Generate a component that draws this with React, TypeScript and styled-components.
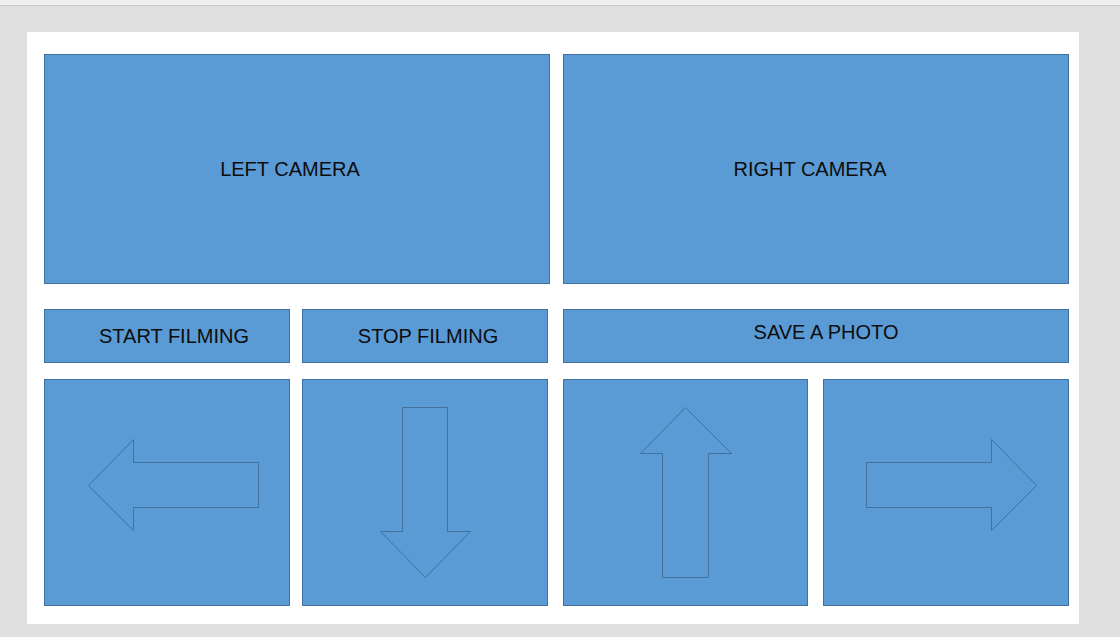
import styled, { createGlobalStyle } from "styled-components"

const GlobalStyle = createGlobalStyle`
  html, body {
    margin: 0;
    padding: 0;
    background: #e0e0e0;
    font-family: "Liberation Sans", Arial, sans-serif;
  }
`

type Dir = "left" | "right" | "up" | "down"

// arrow outlines in the pad's inner coordinates (inside the 1px border)
const arrows: Record<Dir, string> = {
  left: "43.5,105.5 88.5,59.5 88.5,82.5 213.5,82.5 213.5,127.5 88.5,127.5 88.5,150.5",
  down: "99.5,27.5 144.5,27.5 144.5,151.5 167.5,151.5 122.5,197.5 77.5,151.5 99.5,151.5",
  up: "121.5,27.5 167.5,73.5 144.5,73.5 144.5,197.5 98.5,197.5 98.5,73.5 76.5,73.5",
  right: "167.5,59.5 212.5,105.5 167.5,150.5 167.5,127.5 42.5,127.5 42.5,82.5 167.5,82.5",
}

const App = () => {
  return (
    <>
      <GlobalStyle />
      <TopStrip />
      <Panel>
        <CameraRow>
          <Tile $dx={-14}>LEFT CAMERA</Tile>
          <Tile $dx={-12}>RIGHT CAMERA</Tile>
        </CameraRow>
        <ControlRow>
          <Half $cols="246px 246px" $gap={12}>
            <Button $dx={14}>START FILMING</Button>
            <Button $dx={6}>STOP FILMING</Button>
            <ArrowPad dir="left" />
            <ArrowPad dir="down" />
          </Half>
          <Half $cols="245px 246px" $gap={15}>
            <Button $dx={20} $dy={-8} $wide>
              SAVE A PHOTO
            </Button>
            <ArrowPad dir="up" />
            <ArrowPad dir="right" />
          </Half>
        </ControlRow>
      </Panel>
    </>
  )
}

const ArrowPad = ({ dir }: { dir: Dir }) => (
  <Pad>
    <svg width="100%" height="100%">
      <polygon points={arrows[dir]} fill="none" stroke="#41719c" strokeWidth="1" />
    </svg>
  </Pad>
)

export default App

const TopStrip = styled.div`
  height: 5px;
  background: #f0f0f0;
  border-bottom: 1px solid #c8c8c8;
`

const Panel = styled.div`
  box-sizing: border-box;
  margin: 26px 0 0 27px;
  width: 1052px;
  height: 592px;
  background: #fff;
  padding: 22px 10px 18px 17px;
  display: flex;
  flex-direction: column;
  gap: 25px;
`

const CameraRow = styled.div`
  display: grid;
  grid-template-columns: 506px 506px;
  column-gap: 13px;
  height: 230px;
`

const Box = styled.div`
  box-sizing: border-box;
  background: #5b9bd5;
  border: 1px solid #41719c;
`

const Tile = styled(Box)<{ $dx?: number; $dy?: number }>`
  display: flex;
  align-items: center;
  justify-content: center;
  font-size: 20px;
  color: #0d0d0d;
  padding-left: ${(p) => Math.max(p.$dx ?? 0, 0)}px;
  padding-right: ${(p) => Math.max(-(p.$dx ?? 0), 0)}px;
  padding-top: ${(p) => Math.max(p.$dy ?? 0, 0)}px;
  padding-bottom: ${(p) => Math.max(-(p.$dy ?? 0), 0)}px;
`

const ControlRow = styled.div`
  display: flex;
  gap: 15px;
`

const Half = styled.div<{ $cols: string; $gap: number }>`
  display: grid;
  grid-template-columns: ${(p) => p.$cols};
  grid-template-rows: 54px 227px;
  column-gap: ${(p) => p.$gap}px;
  row-gap: 16px;
`

const Button = styled(Tile)<{ $wide?: boolean }>`
  grid-column: ${(p) => (p.$wide ? "1 / 3" : "auto")};
`

const Pad = styled(Box)`
  display: flex;

  svg {
    display: block;
  }
`
